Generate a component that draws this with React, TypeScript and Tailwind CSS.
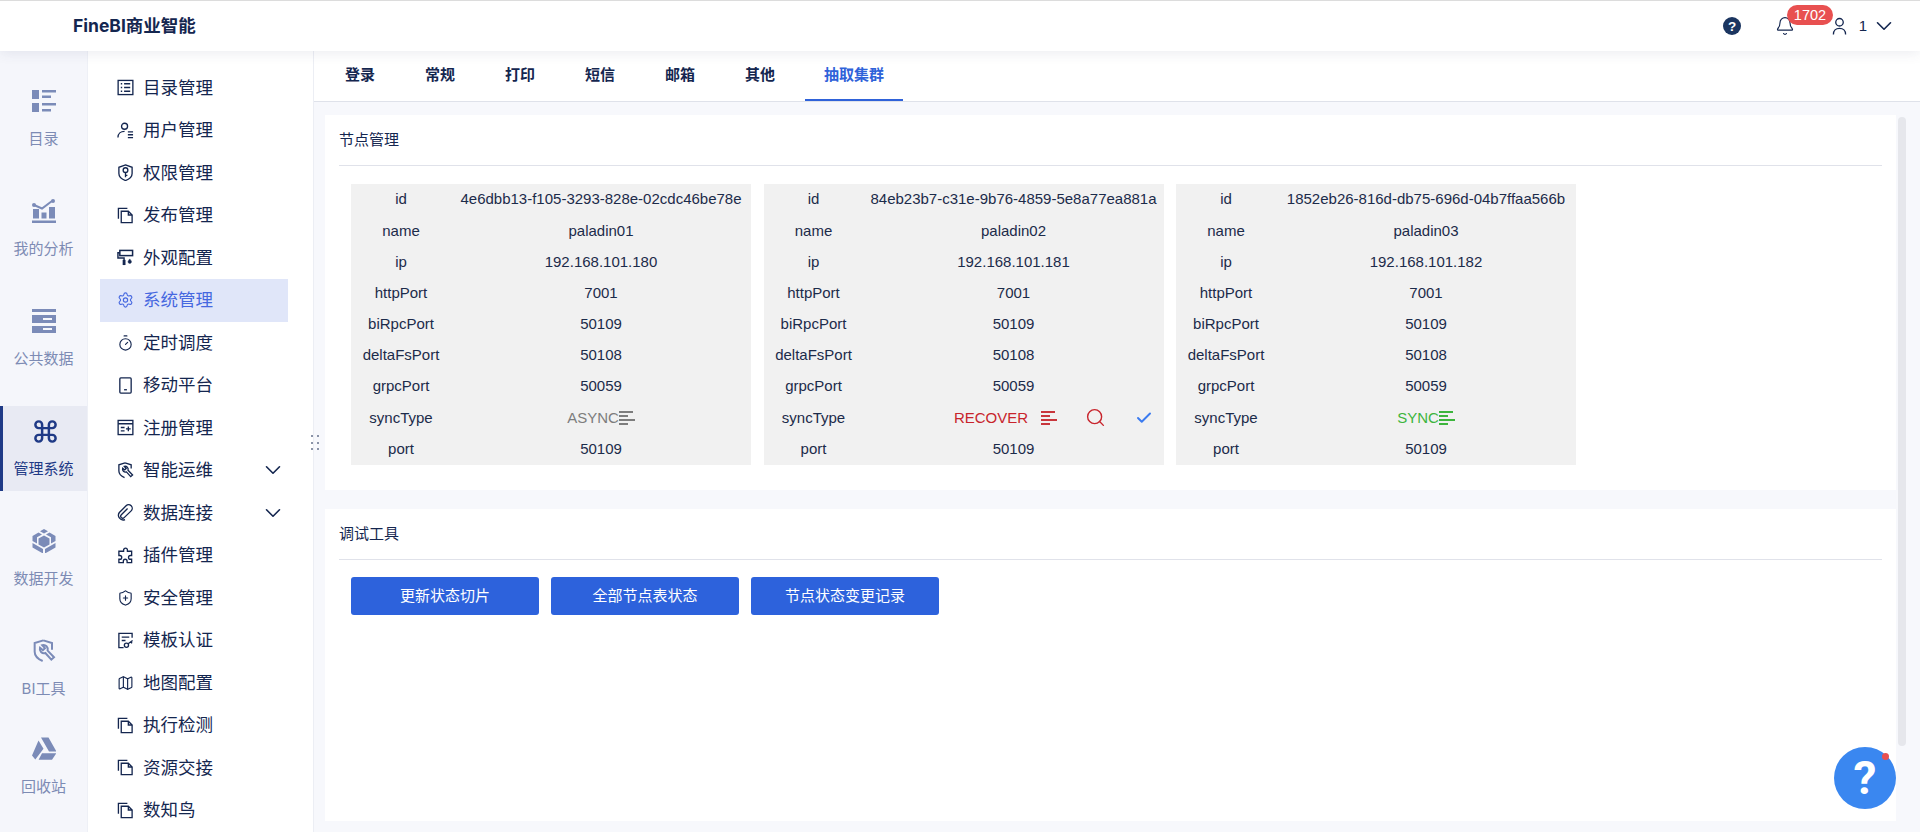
import React from "react";
import { Bell, ChevronDown, Command, ShieldPlus, Map as MapIcon, Settings, Timer, Search, Check } from "lucide-react";

const S = ({ children, c = "" }: { children: React.ReactNode; c?: string }) => (
  <svg viewBox="0 0 18 18" fill="none" stroke="currentColor" strokeWidth="1.4" className={c}>{children}</svg>
);
const sz = "w-[17px] h-[17px]";
const CopyI = () => <S c={sz}><path d="M1.5 12.5V1.5H11" /><path d="M4.5 4.5h7.5l4 4v8h-11.5z" /><path d="M12 4.5v4h4" /></S>;
const ListI = () => <S c={sz}><rect x="1.2" y="1.5" width="15.6" height="15" /><path d="M4 5h1.5M7.5 5H14M4 9h1.5M7.5 9H14M4 13h1.5M7.5 13H14" /></S>;
const UserI = () => <S c={sz}><circle cx="8" cy="4.5" r="3.2" /><path d="M1 16.5c0-4 3-6.5 7-6.5M11.5 10.5H17M11.5 13.5H17M11.5 16.5H17" /></S>;
const ShieldKey = () => <S c={sz}><path d="M9 1l7 2.5v6.5c0 3.5-3 6-7 7.5-4-1.5-7-4-7-7.5V3.5z" /><circle cx="9" cy="6.5" r="2.5" /><path d="M9 9v5M9 12h2" /></S>;
const PhoneI = () => <S c={sz}><rect x="3" y="1" width="12" height="16" rx="1" /><path d="M7.5 13.5h3" /></S>;
const RegI = () => <S c={sz}><rect x="1.2" y="1.5" width="15.6" height="15" /><path d="M1.2 5h15.6M4 9h4M4 12.5h4M12 8v5M9.5 10.5h5" /></S>;
const WrenchI = () => <S c={sz}><path d="M8.5 1l6.5 2v4M8 16.5C4.500 15 2 12.500 2 9.500V3l6.500-2" /><path d="M6 6.500a3.200 3.200 0 0 0 4 4l4.500 5 2-1.800-4.800-5a3.200 3.200 0 0 0-4-4l2 2.200-1.500 1.500z" /></S>;
const CertI = () => <S c={sz}><path d="M16 6V1.500H2v15h5" /><path d="M5 5.500h8M5 9h4" /><circle cx="10" cy="14" r="2.200" /><path d="M11.800 12.500L16.500 9M14.500 10.500l1.500 1.500" /></S>;
const RollerI = () => <S c={sz}><rect x="3" y="1.500" width="13.500" height="5.500" strokeWidth="1.600" /><path d="M3 4H1v5.500h6.500V12" strokeWidth="1.500" /><path d="M7.500 11.500V17" strokeWidth="3" /><path d="M13.500 10.500c1.200 1.500 1.800 2.300 1.800 3a1.800 1.800 0 0 1-3.600 0c0-.7.600-1.500 1.800-3z" fill="currentColor" strokeWidth="0.500" /></S>;
const ClipI = () => <S c={sz}><path d="M11.200 4.800l-6.600 6.600a2.100 2.100 0 0 0 3 3L15 7.300a3.800 3.800 0 0 0-5.400-5.400L2.500 9a5 5 0 0 0 6 7.500" /></S>;
const PuzzleI = () => <S c={sz}><path d="M7 3.200a2 2 0 1 1 4 0v1.300h4.500V9h-1.300a2 2 0 1 0 0 4h1.300v3.500h-4.800V15a2 2 0 1 0-4 0v1.500H2V13h1a2 2 0 1 0 0-4H2V4.500h5z" /></S>;

const menu: [string, React.ReactNode, boolean?][] = [
  ["目录管理", <ListI />],
  ["用户管理", <UserI />],
  ["权限管理", <ShieldKey />],
  ["发布管理", <CopyI />],
  ["外观配置", <RollerI />],
  ["系统管理", <Settings size={18} strokeWidth={1.6} />],
  ["定时调度", <Timer size={18} strokeWidth={1.6} />],
  ["移动平台", <PhoneI />],
  ["注册管理", <RegI />],
  ["智能运维", <WrenchI />, true],
  ["数据连接", <ClipI />, true],
  ["插件管理", <PuzzleI />],
  ["安全管理", <ShieldPlus size={18} strokeWidth={1.6} />],
  ["模板认证", <CertI />],
  ["地图配置", <MapIcon size={18} strokeWidth={1.6} />],
  ["执行检测", <CopyI />],
  ["资源交接", <CopyI />],
  ["数知鸟", <CopyI />],
];

const RI = ({ children }: { children: React.ReactNode }) => (
  <svg viewBox="0 0 24 24" className="w-6 h-6" fill="#7b8bb8">{children}</svg>
);
const rail: [string, React.ReactNode, boolean?][] = [
  ["目录", <RI><path d="M0 1h7v9H0zM0 14h7v9H0z" /><path d="M10 1h14v2.500H10zM10 6.500h9V9h-9zM10 14h14v2.500H10zM10 20h9v2.500h-9z" /></RI>],
  ["我的分析", <RI><path d="M0 21.500h24V24H0zM1 10h6v9.500H1zM9.500 13.500h5v6h-5zM17 8h6v11.500h-6z" /><path d="M2 6l8 3.500L20 2" stroke="#7b8bb8" strokeWidth="2" fill="none" /><circle cx="2" cy="6" r="2" /><circle cx="21" cy="2" r="2" /></RI>],
  ["公共数据", <RI><path d="M0 0h24v3H0z" /><path fillRule="evenodd" d="M0 6h24v8H0zM11 9v2h9V9zM0 17h24v7H0z" /><path d="M11 19h9v2h-9z" fill="#f5f6fb" /></RI>],
  ["管理系统", <Command size={27} strokeWidth={2.2} className="text-[#1f3a86]" />, true],
  ["数据开发", <RI><path d="M12 0l4 2.300-4 2.300-4-2.300zM6.500 3.500L10 5.500 5 8.300v6.200L.5 12V7zM17.500 3.500L14 5.500l5 2.800v6.200l4.500-2.500V7zM12 6.500l5.500 3v6l-5.500 3-5.500-3v-6zM.5 14L11 20v4.500L.5 18.500zM23.500 14L13 20v4.500l10.500-6z" /></RI>],
  ["BI工具", <svg viewBox="0 0 18 18" fill="none" stroke="#7b8bb8" strokeWidth="1.500" className="w-6 h-6"><path d="M8.500 1l6.500 2v5M8 16.500C4.500 15 2 12.500 2 9.500V3l6.500-2" /><path d="M6 6.500a3.200 3.200 0 0 0 4 4l4.500 5 2-1.800-4.800-5a3.200 3.200 0 0 0-4-4l2 2.200-1.500 1.500z" /></svg>],
  ["回收站", <RI><path d="M9 .5h7.500l8 14H17zM0 18.500l6.500-15 5 8.300-8.200 10.700zM6.600 22.800l3.400-6.600h14.300L20 22.800z" /></RI>],
];

const Lines = ({ c }: { c: string }) => (
  <svg viewBox="0 0 16 16" className={`w-4 h-4 ${c}`} stroke="currentColor" strokeWidth="2"><path d="M0 2h14M0 6h9M0 10h16M0 14h9" /></svg>
);

const Node = ({ id, name, ip, sync }: { id: string; name: string; ip: string; sync: React.ReactNode }) => {
  const rows: [string, React.ReactNode][] = [
    ["id", id], ["name", name], ["ip", ip], ["httpPort", "7001"], ["biRpcPort", "50109"],
    ["deltaFsPort", "50108"], ["grpcPort", "50059"], ["syncType", sync], ["port", "50109"],
  ];
  return (
    <div className="w-[400px] bg-[#f1f1f1] grid grid-cols-[100px_300px] auto-rows-[31.2px] text-[15px] text-[#1c2b4a] items-center text-center font-['Liberation_Sans',sans-serif]">
      {rows.map(([k, v]) => (
        <React.Fragment key={k}>
          <div>{k}</div>
          <div className="flex items-center justify-center whitespace-nowrap">{v}</div>
        </React.Fragment>
      ))}
    </div>
  );
};

export default function App() {
  const tabs = ["登录", "常规", "打印", "短信", "邮箱", "其他", "抽取集群"];
  return (
    <div className="w-[1920px] h-[832px] overflow-hidden flex flex-col bg-white relative text-[#14264f] font-['Inter','Noto_Sans_CJK_SC',sans-serif]">
      <header className="h-[51px] shrink-0 border-t border-[#dcdcdc] bg-white flex items-center shadow-[0_2px_12px_rgba(60,70,110,0.10)] z-10 relative">
        <div className="pl-[73px] text-[17.500px] font-bold text-[#14264f]">FineBI商业智能</div>
        <div className="ml-auto flex items-center pr-[23px] relative">
          <svg viewBox="0 0 20 20" className="w-[18px] h-[18px] mr-[34px]"><circle cx="10" cy="10" r="10" fill="#1b3560" /><text x="10" y="15.500" fontSize="15" fontWeight="700" textAnchor="middle" fill="#fff" fontFamily="Liberation Sans">?</text></svg>
          <Bell size={20} strokeWidth={1.4} className="mr-[37px]" />
          <svg viewBox="0 0 16 18" fill="none" stroke="currentColor" strokeWidth="1.400" className="w-[15px] h-[18px] mr-[12px]"><circle cx="8" cy="5" r="4" /><path d="M1.500 18c0-4 2.500-6.500 6.500-6.500s6.500 2.500 6.500 6.500" /></svg>
          <span className="text-[15px] font-['Liberation_Sans',sans-serif] mr-[4px]">1</span>
          <ChevronDown size={26} strokeWidth={1.5} />
          <span className="absolute right-[87px] -top-[8px] h-5 w-[46px] rounded-full bg-[#e85050] text-white text-[14.500px] leading-5 text-center font-['Liberation_Sans',sans-serif]">1702</span>
        </div>
      </header>
      <div className="flex-1 flex min-h-0">
        <nav className="w-[88px] shrink-0 bg-[#f5f6fb] border-r border-[#eef0f6] pt-[25px] pr-[1px] flex flex-col">
          {rail.map(([t, icon, active], i) => (
            <div key={t} className={`h-[85px] shrink-0 flex flex-col items-center pt-[13px] text-[15px] ${i === 6 ? "-mt-[12px]" : "mb-[25px]"} ${active ? "bg-[#e8eaf3] border-l-[3px] border-[#1f3a86] text-[#1f3a86] -mr-[1px]" : "text-[#7d8bb4] pl-[1px]"}`}>
              <div className="h-6 flex items-center justify-center">{icon}</div>
              <div className={`mt-[14px] leading-[24px] ${active ? "-ml-[3px]" : ""}`}>{t}</div>
            </div>
          ))}
        </nav>
        <aside className="w-[225px] shrink-0 bg-white pt-[15.500px] pl-[12px] relative">
          {menu.map(([t, icon, arrow]) => {
            const on = t === "系统管理";
            return (
              <div key={t} className={`w-[188px] h-[42.500px] flex items-center pl-[17px] pr-[2px] text-[17.500px] ${on ? "bg-[#e0e6f9] text-[#4668e0]" : "text-[#14264f]"}`}>
                <span className="w-[17px] flex justify-center">{icon}</span>
                <span className="ml-[9px]">{t}</span>
                {arrow && <ChevronDown size={26} strokeWidth={1.5} className="ml-auto" />}
              </div>
            );
          })}
          <div className="absolute left-[223px] top-[384px] grid grid-cols-2 gap-x-[6px] gap-y-[4.500px] z-10">
            {Array.from({ length: 6 }).map((_, i) => <span key={i} className="w-[2px] h-[2px] bg-[#8a93a8]" />)}
          </div>
        </aside>
        <main className="flex-1 min-w-0 bg-[#f7f8fc] border-l border-[#eceef4] flex flex-col relative">
          <div className="h-[51px] shrink-0 bg-white border-b border-[#dfe2ea] pl-[11px] flex text-[15px] font-bold text-[#14264f]">
            {tabs.map((t) => (
              <div key={t} className={`mr-[10px] h-[50px] leading-[48px] ${t === "抽取集群" ? "px-[19px] text-[#2f62d9] border-b-2 border-[#2f62d9]" : "px-5"}`}>{t}</div>
            ))}
          </div>
          <div className="flex-1 relative pl-[11px] pr-[10px] pt-[13px]">
            <section className="w-[1571px] h-[375px] bg-white px-[14px]">
              <div className="h-[51px] border-b border-[#e0e2ea] text-[15px] leading-[49px] w-[1543px]">节点管理</div>
              <div className="flex gap-x-[12.500px] pl-[12px] pt-[18px]">
                <Node id="4e6dbb13-f105-3293-828e-02cdc46be78e" name="paladin01" ip="192.168.101.180"
                  sync={<span className="flex items-center text-[#7d7d7d]">ASYNC<Lines c="text-[#7d7d7d]" /></span>} />
                <Node id="84eb23b7-c31e-9b76-4859-5e8a77ea881a" name="paladin02" ip="192.168.101.181"
                  sync={<span className="flex items-center text-[#c8242c] pl-[80px]">RECOVER<Lines c="ml-[13px] text-[#c8363c]" /><Search size={21} strokeWidth={1.6} className="ml-[28px]" /><Check size={18} strokeWidth={2.6} className="ml-[29px] text-[#3b7bf0]" /></span>} />
                <Node id="1852eb26-816d-db75-696d-04b7ffaa566b" name="paladin03" ip="192.168.101.182"
                  sync={<span className="flex items-center text-[#3db53d]">SYNC<Lines c="text-[#3db53d]" /></span>} />
              </div>
            </section>
            <section className="w-[1571px] h-[312px] mt-[19px] bg-white px-[14px]">
              <div className="h-[51px] border-b border-[#e0e2ea] text-[15px] leading-[50px] w-[1543px]">调试工具</div>
              <div className="flex gap-3 pl-[12px] pt-[17px]">
                {["更新状态切片", "全部节点表状态", "节点状态变更记录"].map((b) => (
                  <button key={b} className="w-[188px] h-[38px] rounded-[3px] bg-[#2d62dc] text-white text-[15px]">{b}</button>
                ))}
              </div>
            </section>
            <div className="absolute left-[1584px] top-[15px] w-2 h-[629px] rounded-full bg-[#e6e7ec]" />
          </div>
          <div className="absolute left-[1520px] top-[696px] w-[62px] h-[62px] rounded-full bg-[#3a87f0] flex items-center justify-center text-white text-[46px] font-bold leading-none font-['Roboto',sans-serif]">?
            <span className="absolute right-[7px] top-[6px] w-[7px] h-[7px] rounded-full bg-[#e85050]" />
          </div>
        </main>
      </div>
    </div>
  );
}
